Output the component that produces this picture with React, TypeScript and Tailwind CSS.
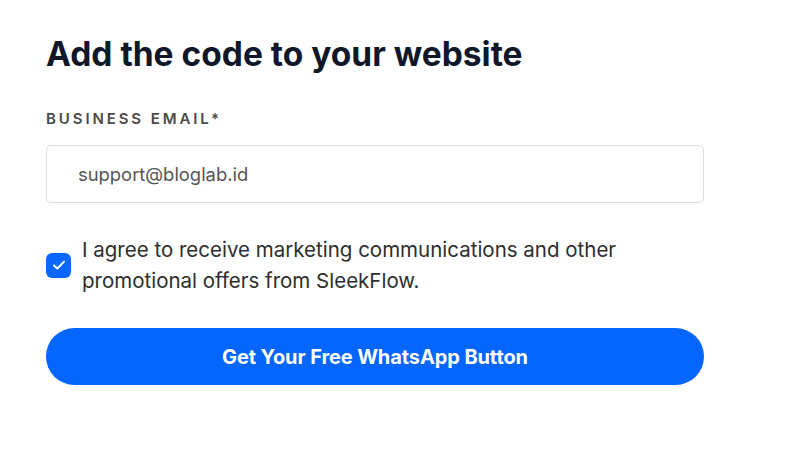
import { useState } from 'react'

export default function App() {
  const [agree, setAgree] = useState(true)
  const [email, setEmail] = useState('support@bloglab.id')

  return (
    <main className="min-h-[450px] w-[800px] bg-white pl-[46px] pt-[34px] font-['Inter',sans-serif]">
      <div className="w-[658px]">
        <h1 className="text-[33.5px] font-bold leading-[40px] tracking-[0px] text-[#0f1729]">
          Add the code to your website
        </h1>

        <label className="mt-[36px] block text-[15px] font-semibold leading-[18px] tracking-[2.9px] text-[#4a4a4a]">
          BUSINESS EMAIL*
        </label>
        <input
          value={email}
          onChange={(e) => setEmail(e.target.value)}
          className="mt-[17px] h-[58px] w-full rounded-[5px] border border-[#dcdcdc] bg-white px-[31px] text-[18.4px] text-[#555] outline-none"
        />

        <div className="mt-[31px] flex items-center gap-[11px]">
          <button
            onClick={() => setAgree((a) => !a)}
            className={`flex h-[25px] w-[25px] shrink-0 items-center justify-center rounded-[6px] ${agree ? 'bg-[#0a66ff]' : 'border border-[#aaa] bg-white'}`}
          >
            {agree && (
              <svg width="16" height="16" viewBox="0 0 16 16" fill="none">
                <path d="M3 8.4 6.4 11.5 13 4.6" stroke="white" strokeWidth="2" strokeLinecap="round" strokeLinejoin="round" />
              </svg>
            )}
          </button>
          <p className="text-[20.5px] leading-[31px] text-[#2e2e2e]">
            I agree to receive marketing communications and other
            <br />
            promotional offers from SleekFlow.
          </p>
        </div>

        <button className="mt-[32px] h-[57px] w-full rounded-full bg-[#0466ff] text-[20px] font-bold tracking-[-0.1px] text-white">
          Get Your Free WhatsApp Button
        </button>
      </div>
    </main>
  )
}
